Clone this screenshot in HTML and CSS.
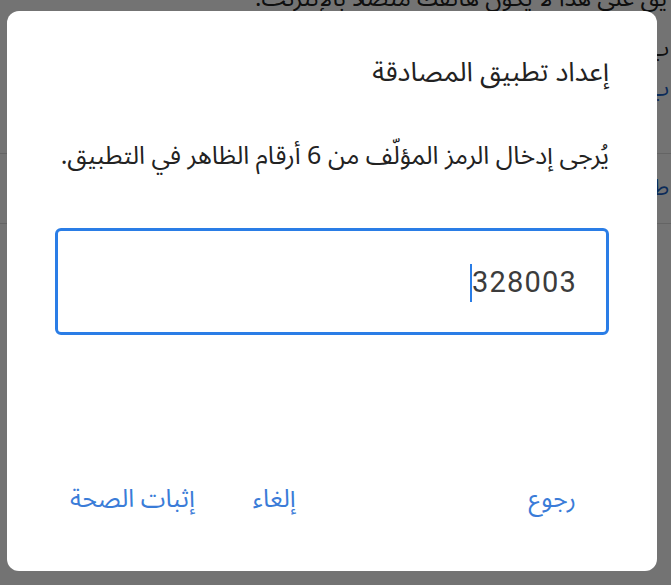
FILE: index.html
```html
<!DOCTYPE html>
<html lang="ar" dir="rtl">
<head>
<meta charset="utf-8">
<link rel="stylesheet" href="styles.css">
</head>
<body>
<div class="page">
  <p class="bg-top">يق على هذا لا يكون هاتفك متصلا بالإنترنت.</p>
  <div class="bg-row bg-first">
    <span class="bg-dark">ب</span>
    <span class="bg-blue">ب</span>
  </div>
  <div class="bg-row bg-line"><span class="bg-blue">ط</span></div>
  <div class="bg-row bg-line"></div>
</div>
<div class="scrim">
  <div class="dialog">
    <h1 class="title">إعداد تطبيق المصادقة</h1>
    <p class="msg">يُرجى إدخال الرمز المؤلّف من 6 أرقام الظاهر في التطبيق.</p>
    <div class="field"><span class="caret"></span><span class="code">328003</span></div>
    <div class="actions">
      <span class="btn">رجوع</span>
      <span class="spacer"></span>
      <span class="btn">إلغاء</span>
      <span class="btn">إثبات الصحة</span>
    </div>
  </div>
</div>
</body>
</html>
```
FILE: styles.css
```css
html, body {
  margin: 0;
  padding: 0;
  width: 671px;
  height: 585px;
  overflow: hidden;
  font-family: "Noto Sans Arabic", "DejaVu Sans", sans-serif;
}
.page {
  background: #fff;
  height: 585px;
}
.bg-top {
  margin: 0;
  padding: 0 4px;
  font-size: 24px;
  line-height: 24px;
  margin-top: -13px;
  color: #222;
  text-align: right;
  white-space: nowrap;
}
.bg-row {
  height: 70px;
  font-size: 22px;
  line-height: 40px;
  padding-right: 2px;
  display: flex;
  flex-direction: column;
}
.bg-first { height: 142px; padding-top: 18px; box-sizing: border-box; }
.bg-line { border-top: 1px solid #ddd; padding-top: 14px; box-sizing: border-box; }
.bg-blue { color: #1a5fc6; }
.bg-dark { color: #222; }
.scrim {
  position: fixed;
  inset: 0;
  background: rgba(0,0,0,0.55);
  padding: 11px 14px 14px 7px;
}
.dialog {
  background: #fff;
  border-radius: 12px;
  height: 560px;
  box-sizing: border-box;
  padding: 44px 48px 0 48px;
  display: flex;
  flex-direction: column;
}
.title {
  margin: 0;
  font-weight: normal;
  font-size: 27px;
  line-height: 36px;
  color: #222;
}
.msg {
  margin: 48px 0 0 0;
  font-size: 25px;
  line-height: 34px;
  color: #222;
}
.field {
  margin-top: 55px;
  height: 107px;
  box-sizing: border-box;
  border: 3px solid #2a7de6;
  border-radius: 6px;
  display: flex;
  align-items: center;
  justify-content: flex-start;
  padding-right: 29px;
  direction: rtl;
}
.code {
  font-family: Roboto, sans-serif;
  font-size: 29px;
  letter-spacing: 1.2px;
  color: #3c3c3c;
  direction: ltr;
}
.caret {
  order: 2;
  width: 2px;
  height: 38px;
  background: #2a7de6;
  margin-top: 2px;
}
.actions {
  margin-top: 146px;
  display: flex;
  align-items: center;
  padding: 0 33px 0 15px;
  gap: 58px;
}
.spacer { flex: 1; }
.btn {
  color: #3a7cd8;
  font-size: 25px;
  line-height: 36px;
}
```
